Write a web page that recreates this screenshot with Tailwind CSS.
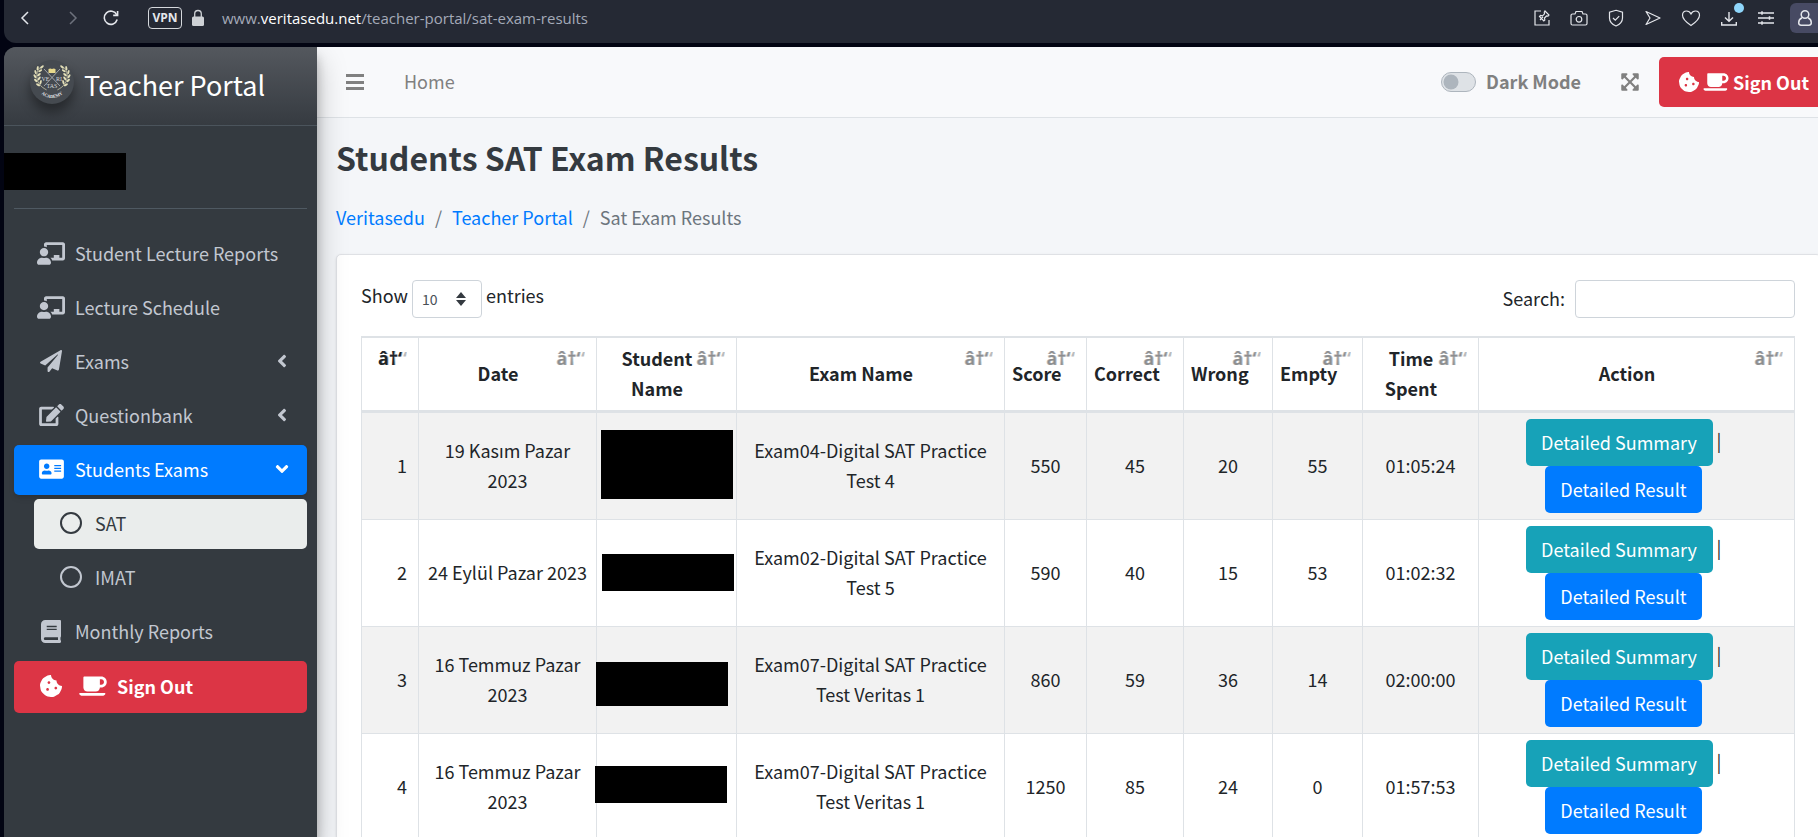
<!DOCTYPE html>
<html lang="en">
<head>
<meta charset="utf-8">
<title>Students SAT Exam Results</title>
<script src="https://cdn.jsdelivr.net/npm/@tailwindcss/browser@4"></script>
</head>
<body class="flex h-screen flex-col overflow-hidden bg-[#020412] font-['Noto_Sans_CJK_KR','Noto_Sans',sans-serif] text-lg leading-[30px] text-[#212529]">

<svg class="hidden" aria-hidden="true">
  <symbol id="i-teacher" viewBox="0 0 640 512"><path d="M208 352c-2.39 0-4.78.35-7.06 1.09C187.98 357.3 174.35 360 160 360c-14.35 0-27.98-2.7-40.95-6.91-2.28-.74-4.66-1.09-7.05-1.09C49.94 352-.33 402.48 0 464.62.14 490.88 21.73 512 48 512h224c26.27 0 47.86-21.12 48-47.38.33-62.14-49.94-112.62-112-112.62zm-48-32c53.02 0 96-42.98 96-96s-42.98-96-96-96-96 42.98-96 96 42.98 96 96 96zM592 0H208c-26.47 0-48 22.25-48 49.59V96c23.42 0 45.1 6.78 64 17.8V64h352v288h-64v-64H384v64h-76.24c19.1 16.69 33.12 38.73 39.69 64H592c26.47 0 48-22.25 48-49.59V49.59C640 22.25 618.47 0 592 0z"/></symbol>
  <symbol id="i-plane" viewBox="0 0 512 512"><path d="M476 3.2L12.5 270.6c-18.1 10.4-15.8 35.6 2.2 43.2L121 358.4l287.3-253.2c5.5-4.9 13.3 2.6 8.6 8.3L176 407v80.5c0 23.6 28.5 32.9 42.5 15.8L282 426l124.6 52.2c14.2 6 30.4-2.9 33-18.2l72-432C515 7.8 493.3-6.8 476 3.2z"/></symbol>
  <symbol id="i-edit" viewBox="0 0 576 512"><path d="M402.6 83.2l90.2 90.2c3.8 3.8 3.8 10 0 13.8L274.4 405.6l-92.8 10.3c-12.4 1.4-22.9-9.1-21.5-21.5l10.3-92.8L388.8 83.2c3.8-3.8 10-3.8 13.8 0zm162-22.9l-48.8-48.8c-15.2-15.2-39.9-15.2-55.2 0l-35.4 35.4c-3.8 3.8-3.8 10 0 13.8l90.2 90.2c3.8 3.8 10 3.8 13.8 0l35.4-35.4c15.2-15.3 15.2-40 0-55.2zM384 346.2V448H64V128h229.8c3.2 0 6.2-1.3 8.5-3.5l40-40c7.6-7.6 2.2-20.5-8.5-20.5H48C21.5 64 0 85.5 0 112v352c0 26.5 21.5 48 48 48h352c26.5 0 48-21.5 48-48V306.2c0-10.7-12.9-16-20.5-8.5l-40 40c-2.2 2.3-3.5 5.3-3.5 8.5z"/></symbol>
  <symbol id="i-card" viewBox="0 0 576 512"><path d="M528 32H48C21.5 32 0 53.5 0 80v352c0 26.5 21.5 48 48 48h480c26.5 0 48-21.5 48-48V80c0-26.5-21.5-48-48-48zm-352 96c35.3 0 64 28.7 64 64s-28.7 64-64 64-64-28.7-64-64 28.7-64 64-64zm112 236.8c0 10.6-10 19.2-22.4 19.2H86.4C74 384 64 375.4 64 364.8v-19.2c0-31.8 30.1-57.6 67.2-57.6h5c12.3 5.1 25.7 8 39.8 8s27.6-2.9 39.8-8h5c37.1 0 67.2 25.8 67.2 57.6v19.2zM512 312c0 4.4-3.6 8-8 8H360c-4.4 0-8-3.6-8-8v-16c0-4.4 3.6-8 8-8h144c4.4 0 8 3.6 8 8v16zm0-64c0 4.4-3.6 8-8 8H360c-4.4 0-8-3.6-8-8v-16c0-4.4 3.6-8 8-8h144c4.4 0 8 3.6 8 8v16zm0-64c0 4.4-3.6 8-8 8H360c-4.4 0-8-3.6-8-8v-16c0-4.4 3.6-8 8-8h144c4.4 0 8 3.6 8 8v16z"/></symbol>
  <symbol id="i-book" viewBox="0 0 448 512"><path d="M448 360V24c0-13.3-10.7-24-24-24H96C43 0 0 43 0 96v320c0 53 43 96 96 96h328c13.3 0 24-10.7 24-24v-16c0-7.5-3.5-14.3-8.9-18.7-4.2-15.4-4.2-59.3 0-74.7 5.4-4.3 8.9-11.1 8.9-18.6zM128 134c0-3.3 2.7-6 6-6h212c3.3 0 6 2.7 6 6v20c0 3.3-2.7 6-6 6H134c-3.3 0-6-2.7-6-6v-20zm0 64c0-3.3 2.7-6 6-6h212c3.3 0 6 2.7 6 6v20c0 3.3-2.7 6-6 6H134c-3.3 0-6-2.7-6-6v-20zm253.4 250H96c-17.7 0-32-14.3-32-32 0-17.6 14.4-32 32-32h285.4c-1.9 17.1-1.9 46.9 0 64z"/></symbol>
  <symbol id="i-cookie" viewBox="0 0 512 512"><path d="M510.52 255.82c-69.97-.85-126.47-57.69-126.47-127.86-70.17 0-127-56.49-127.86-126.45-27.26-4.14-55.13.3-79.72 12.82l-69.13 35.22a132.221 132.221 0 0 0-57.79 57.81l-35.1 68.88a132.645 132.645 0 0 0-12.82 80.95l12.08 76.27a132.521 132.521 0 0 0 37.16 72.96l54.77 54.76a132.036 132.036 0 0 0 72.71 37.06l76.71 12.15c27.51 4.36 55.7-.11 80.53-12.76l69.13-35.21a132.273 132.273 0 0 0 57.79-57.81l35.1-68.88c12.56-24.64 17.01-52.58 12.91-79.91zM176 368c-17.67 0-32-14.33-32-32s14.33-32 32-32 32 14.33 32 32-14.33 32-32 32zm32-160c-17.67 0-32-14.33-32-32s14.33-32 32-32 32 14.33 32 32-14.33 32-32 32zm160 128c-17.67 0-32-14.33-32-32s14.33-32 32-32 32 14.33 32 32-14.33 32-32 32z"/></symbol>
  <symbol id="i-mug" viewBox="0 0 640 512"><path d="M192 384h192c53 0 96-43 96-96h32c70.6 0 128-57.4 128-128S582.6 32 512 32H120c-13.3 0-24 10.7-24 24v232c0 53 43 96 96 96zM512 96c35.3 0 64 28.7 64 64s-28.7 64-64 64h-32V96h32zm47.7 384H48.3c-47.6 0-61-64-36-64h583.3c25 0 11.8 64-35.9 64z"/></symbol>
  <symbol id="i-angle" viewBox="0 0 256 512"><path d="M31.7 239l136-136c9.4-9.4 24.6-9.4 33.9 0l22.6 22.6c9.4 9.4 9.4 24.6 0 33.9L127.9 256l96.4 96.4c9.4 9.4 9.4 24.6 0 33.9L201.700 409c-9.4 9.4-24.6 9.4-33.9 0l-136-136c-9.5-9.4-9.5-24.6-.1-34z"/></symbol>
  <symbol id="i-expand" viewBox="0 0 448 512"><path d="M448 344v112a23.94 23.94 0 0 1-24 24H312c-21.39 0-32.09-25.9-17-41l36.2-36.2L224 295.6 116.77 402.9 153 439c15.09 15.1 4.39 41-17 41H24a23.94 23.94 0 0 1-24-24V344c0-21.4 25.89-32.1 41-17l36.19 36.2L184.46 256 77.18 148.7 41 185c-15.1 15.1-41 4.4-41-17V56a23.94 23.94 0 0 1 24-24h112c21.39 0 32.09 25.9 17 41l-36.2 36.2L224 216.4l107.23-107.3L295 73c-15.09-15.1-4.39-41 17-41h112a23.94 23.94 0 0 1 24 24v112c0 21.4-25.89 32.1-41 17l-36.19-36.2L263.54 256l107.28 107.3L407 327.1c15.1-15.2 41-4.5 41 16.9z"/></symbol>
  <symbol id="i-laurel" viewBox="0 0 20 30">
    <path d="M16 29C8 25 4 19 4.500 11C5 7 7 4 9.500 1.500" fill="none" stroke="currentColor" stroke-width=".8"/>
    <g fill="currentColor">
      <ellipse cx="10.500" cy="2" rx="2.600" ry="1.200" transform="rotate(-40 10.500 2)"/>
      <ellipse cx="5.500" cy="3.500" rx="2.600" ry="1.200" transform="rotate(-80 5.500 3.500)"/>
      <ellipse cx="8.500" cy="6.500" rx="2.600" ry="1.200" transform="rotate(-35 8.500 6.500)"/>
      <ellipse cx="3" cy="8" rx="2.600" ry="1.200" transform="rotate(75 3 8)"/>
      <ellipse cx="7" cy="11" rx="2.600" ry="1.200" transform="rotate(-40 7 11)"/>
      <ellipse cx="2.300" cy="13" rx="2.600" ry="1.200" transform="rotate(60 2.300 13)"/>
      <ellipse cx="7.300" cy="15.500" rx="2.600" ry="1.200" transform="rotate(-55 7.300 15.500)"/>
      <ellipse cx="3.300" cy="18" rx="2.600" ry="1.200" transform="rotate(45 3.300 18)"/>
      <ellipse cx="9" cy="20" rx="2.600" ry="1.200" transform="rotate(-75 9 20)"/>
      <ellipse cx="6" cy="23" rx="2.600" ry="1.200" transform="rotate(30 6 23)"/>
    </g>
  </symbol>
</svg>

<!-- Browser toolbar -->
<header class="ml-1 flex h-[43px] shrink-0 items-start justify-between rounded-bl-xl bg-[#252934] text-[#e4e6eb]">
  <div class="flex h-9 items-center">
    <button aria-label="Back" class="ml-[13px] w-[18px]"><svg class="h-[18px] w-[18px]" viewBox="0 0 18 18" fill="none" stroke="currentColor" stroke-width="1.500"><path d="M11 3L5 9l6 6"/></svg></button>
    <button aria-label="Forward" class="ml-[29px] w-[18px] text-[#6d717c]"><svg class="h-[18px] w-[18px]" viewBox="0 0 18 18" fill="none" stroke="currentColor" stroke-width="1.500"><path d="M6 3l6 6-6 6"/></svg></button>
    <button aria-label="Reload" class="ml-5 w-[18px]"><svg class="h-[18px] w-[18px]" viewBox="0 0 18 18" fill="none" stroke="currentColor" stroke-width="1.600"><path d="M15.200 10.600A6.600 6.600 0 1 1 14.800 5.800"/><path d="M15.600 2v4.400h-4.400" /></svg></button>
    <button class="ml-7 flex h-[22px] w-[34px] items-center justify-center rounded border border-[#d5d8dc] font-['Open_Sans',sans-serif] text-xs font-bold">VPN</button>
    <svg class="ml-2.5 h-[18px] w-3 text-[#ced1d5]" viewBox="0 0 12 18" fill="none" stroke="currentColor" stroke-width="1.300"><path d="M2.700 8V4.800a3.300 3.300 0 0 1 6.600 0V8"/><rect y="7.500" width="12" height="9.500" rx="1.500" fill="currentColor" stroke="none"/></svg>
    <span class="ml-[18px] font-['Open_Sans',sans-serif] text-[15px] text-[#a4aab8]">www.<span class="text-white">veritasedu.net</span>/teacher-portal/sat-exam-results</span>
  </div>
  <div class="-mr-px flex h-9 items-center gap-[19px]">
    <button aria-label="Easy setup"><svg class="h-[18px] w-[18px]" viewBox="0 0 18 18" fill="none" stroke="currentColor" stroke-width="1.200"><path d="M8 2H2v14h14v-5"/><path d="M7 11l3-3M12 2l4 4-1 1.200-1.500-.2-2 2 .3 2-1 1L6.500 7.500l1-1 2 .3 2-2-.2-1.600z"/></svg></button>
    <button aria-label="Snapshot"><svg class="h-[18px] w-[18px]" viewBox="0 0 18 18" fill="none" stroke="currentColor" stroke-width="1.200"><path d="M1 6.500A1.500 1.500 0 0 1 2.500 5H5l1-2.500h6L13 5h2.500A1.500 1.500 0 0 1 17 6.500v8a1.500 1.500 0 0 1-1.500 1.500h-13A1.500 1.500 0 0 1 1 14.500z"/><circle cx="9" cy="10.300" r="2.800"/></svg></button>
    <button aria-label="Ad blocker"><svg class="h-[18px] w-[18px]" viewBox="0 0 18 18" fill="none" stroke="currentColor" stroke-width="1.200"><path d="M9 1.300l6.500 2V9c0 4-3 6.500-6.500 8-3.500-1.500-6.500-4-6.500-8V3.300z"/><path d="M6 9l2.300 2.200L12.200 7.200"/></svg></button>
    <button aria-label="My flow"><svg class="h-[18px] w-[18px]" viewBox="0 0 18 18" fill="none" stroke="currentColor" stroke-width="1.200" stroke-linejoin="round"><path d="M2 2.500L16 9 2 15.500 6 9z"/></svg></button>
    <button aria-label="Favourites"><svg class="h-[18px] w-[20px]" viewBox="0 0 20 18" fill="none" stroke="currentColor" stroke-width="1.200"><path d="M10 16.500C4 12.500 1.500 9.500 1.500 6.300 1.500 3.800 3.300 2 5.600 2 7.500 2 9 3 10 5c1-2 2.500-3 4.400-3 2.300 0 4.100 1.800 4.100 4.300 0 3.200-2.500 6.200-8.500 10.200z"/></svg></button>
    <button aria-label="Downloads" class="relative"><svg class="h-[18px] w-[18px]" viewBox="0 0 18 18" fill="none" stroke="currentColor" stroke-width="1.400"><path d="M9 3v9M5 8.500L9 12.300l4-3.800M1.700 13v3h14.600v-3"/></svg><span class="absolute -top-1.5 left-3.5 size-2.5 rounded-full bg-[#8fd6fb]"></span></button>
    <button aria-label="Settings"><svg class="h-[18px] w-[18px]" viewBox="0 0 18 18" fill="none" stroke="currentColor" stroke-width="1.500"><path d="M1 4h16M1 9h16M1 14h16M5 2.200v3.600M12.500 7.200v3.600M5 12.200v3.600"/></svg></button>
    <button aria-label="Profile" class="-ml-1 flex h-[30px] w-[29px] items-center justify-center rounded-l-md bg-[#474a63]"><svg class="h-[18px] w-[16px]" viewBox="0 0 16 18" fill="none" stroke="currentColor" stroke-width="1.500"><circle cx="8" cy="5.500" r="3.800"/><path d="M5 8.800c-2.200 1-3.300 3-3.300 5 0 1.500 1 2.400 2.400 2.400h7.800c1.400 0 2.400-.9 2.400-2.400 0-2-1.100-4-3.300-5"/></svg></button>
  </div>
</header>

<div class="mt-1 ml-1 flex min-h-0 flex-1 overflow-hidden rounded-tl-xl">

  <!-- Sidebar -->
  <aside class="z-10 w-[313px] shrink-0 bg-[#343a40] text-[#c2c7d0] shadow-[0_14px_28px_rgba(0,0,0,0.25),0_10px_10px_rgba(0,0,0,0.22)]">
    <a href="#" class="flex h-[79px] items-center border-b border-[#4b545c] bg-linear-to-b from-[#54585e] to-[#363b41] pl-[26px] text-white">
      <svg class="mb-2 size-11 shrink-0 rounded-full bg-[#454a50] shadow-[0_8px_12px_rgba(0,0,0,0.4)]" viewBox="0 0 44 44" role="img" aria-label="Veritas Academy">
        <use href="#i-laurel" x="3" y="5" width="17" height="26" class="text-[#e3dfb8]"/>
        <g transform="translate(44 0) scale(-1 1)"><use href="#i-laurel" x="3" y="5" width="17" height="26" class="text-[#e3dfb8]"/></g>
        <path d="M14 9l16 17M30 9L14 26" stroke="#b9bcc0" stroke-width=".8"/>
        <path d="M18.500 9q1.800-1 3.500 0 1.700-1 3.500 0v4h-7z" fill="#e8d98c"/>
        <g fill="#d7d9db" font-family="Liberation Serif, serif" text-anchor="middle"><text x="15.500" y="20.500" font-size="6">VE</text><text x="29" y="20.500" font-size="6">RI</text><text x="22" y="27.500" font-size="6">TAS</text></g>
        <path id="arc" d="M10 33Q22 43 34 33" fill="none"/>
        <text fill="#e5e7e9" font-family="Liberation Serif, serif" font-weight="bold" font-size="4.500"><textPath href="#arc" startOffset="50%" text-anchor="middle">ACADEMY</textPath></text>
      </svg>
      <span class="ml-2.5 pb-0.5 text-[27px]">Teacher Portal</span>
    </a>
    <div class="mx-2.5 mb-5 flex h-[83px] items-center border-b border-[#4f5962]">
      <div class="mt-2 -ml-3.5 h-[37px] w-[126px] bg-black"></div>
    </div>
    <nav class="flex flex-col gap-1 px-2.5">
      <a href="#" class="flex h-[50px] items-center gap-1.5 pb-0.5 pl-[19px]"><span class="flex w-9 justify-center"><svg class="h-[23px] w-[28px] fill-current"><use href="#i-teacher"/></svg></span>Student Lecture Reports</a>
      <a href="#" class="flex h-[50px] items-center gap-1.5 pb-0.5 pl-[19px]"><span class="flex w-9 justify-center"><svg class="h-[23px] w-[28px] fill-current"><use href="#i-teacher"/></svg></span>Lecture Schedule</a>
      <a href="#" class="flex h-[50px] items-center gap-1.5 pr-5 pb-0.5 pl-[19px]"><span class="flex w-9 justify-center"><svg class="size-[22px] fill-current"><use href="#i-plane"/></svg></span><span class="flex-1">Exams</span><svg class="h-5 w-2.5 fill-current"><use href="#i-angle"/></svg></a>
      <a href="#" class="flex h-[50px] items-center gap-1.5 pr-5 pb-0.5 pl-[19px]"><span class="flex w-9 justify-center"><svg class="h-[22px] w-[25px] fill-current"><use href="#i-edit"/></svg></span><span class="flex-1">Questionbank</span><svg class="h-5 w-2.5 fill-current"><use href="#i-angle"/></svg></a>
      <a href="#" class="flex h-[50px] items-center gap-1.5 rounded-[5px] bg-[#007bff] pr-5 pb-0.5 pl-[19px] text-white shadow-md"><span class="flex w-9 justify-center"><svg class="h-[22px] w-[25px] fill-current"><use href="#i-card"/></svg></span><span class="flex-1">Students Exams</span><svg class="h-5 w-2.5 -rotate-90 fill-current"><use href="#i-angle"/></svg></a>
      <a href="#" class="ml-5 flex h-[50px] items-center gap-1.5 rounded-[5px] bg-[#eaedec] pb-0.5 pl-[19px] text-[#343a40]"><span class="flex w-9 justify-center"><span class="size-[22px] rounded-full border-2 border-current"></span></span>SAT</a>
      <a href="#" class="ml-5 flex h-[50px] items-center gap-1.5 pb-0.5 pl-[19px]"><span class="flex w-9 justify-center"><span class="size-[22px] rounded-full border-2 border-current"></span></span>IMAT</a>
      <a href="#" class="flex h-[50px] items-center gap-1.5 pb-0.5 pl-[19px]"><span class="flex w-9 justify-center"><svg class="h-[23px] w-5 fill-current"><use href="#i-book"/></svg></span>Monthly Reports</a>
      <a href="#" class="flex h-[52px] items-center gap-1.5 rounded-[5px] bg-[#dc3545] pb-0.5 pl-[19px] font-bold text-white"><span class="flex w-9 justify-center"><svg class="size-[22px] fill-current"><use href="#i-cookie"/></svg></span><span class="flex w-9 justify-center"><svg class="h-[22px] w-7 fill-current"><use href="#i-mug"/></svg></span>Sign Out</a>
    </nav>
  </aside>

  <!-- Content column, slightly wider than the viewport -->
  <div class="-mr-[21px] min-w-0 flex-1 bg-[#f4f6f9]">
    <div class="flex h-[71px] items-center justify-between border-b border-[#dee2e6] bg-[#f8f9fb] pr-2.5 pl-[29px] text-[#808080]">
      <div class="flex items-center gap-10">
        <button aria-label="Toggle menu" class="flex h-4 w-[18px] flex-col justify-between"><span class="h-[3px] w-full bg-current"></span><span class="h-[3px] w-full bg-current"></span><span class="h-[3px] w-full bg-current"></span></button>
        <a href="#" class="pb-0.5">Home</a>
      </div>
      <div class="flex items-center">
        <label class="flex items-center gap-2.5 font-bold">
          <input type="checkbox" class="h-5 w-[35px] appearance-none rounded-full border border-[#adb5bd] bg-[#dee2e6] before:-mt-px before:-ml-px before:block before:size-5 before:scale-75 before:rounded-full before:bg-[#adb5bd]">
          <span class="pb-0.5">Dark Mode</span>
        </label>
        <button aria-label="Fullscreen" class="ml-10"><svg class="h-5 w-[18px] fill-current"><use href="#i-expand"/></svg></button>
        <button class="ml-5 flex h-[50px] items-center gap-1 rounded-[5px] bg-[#dc3545] px-5 font-bold text-white"><svg class="size-5 fill-current"><use href="#i-cookie"/></svg><svg class="h-5 w-[26px] fill-current"><use href="#i-mug"/></svg>Sign Out</button>
      </div>
    </div>

    <main class="pr-[18px] pl-[19px]">
      <h1 class="pt-[17px] text-[32px] leading-[44px] font-bold text-[#343a40]">Students SAT Exam Results</h1>
      <nav class="mt-[23px] flex gap-2.5 text-[#6c757d]" aria-label="Breadcrumb">
        <a href="#" class="text-[#007bff]">Veritasedu</a><span>/</span>
        <a href="#" class="text-[#007bff]">Teacher Portal</a><span>/</span>
        <span>Sat Exam Results</span>
      </nav>

      <section class="mt-[22px] rounded-[5px] border border-[#dfe1e5] bg-white pt-[25px] pr-[25px] pb-6 pl-6 shadow-sm">
        <div class="flex items-center justify-between">
          <label class="flex items-start gap-1">Show
            <span class="relative">
              <select class="block h-[38px] w-[70px] appearance-none rounded border border-[#ced4da] bg-white pl-[9px] text-sm text-[#495057]"><option>10</option><option>25</option><option>50</option><option>100</option></select>
              <svg class="pointer-events-none absolute top-3 right-4 h-[14px] w-2.5 fill-[#343a40]" viewBox="0 0 10 14"><path d="M5 0l5 6H0zM5 14L0 8h10z"/></svg>
            </span>
            entries</label>
          <label class="flex items-center gap-2.5"><span class="pb-0.5">Search:</span><input type="search" class="h-[38px] w-[220px] rounded border border-[#ced4da] bg-white px-2.5 text-sm"></label>
        </div>

        <table class="mt-[18px] w-full table-fixed border-separate border-spacing-0 border-t-2 border-l border-[#dee2e6] text-center">
          <colgroup><col class="w-[57px]"><col class="w-[178px]"><col class="w-[140px]"><col class="w-[268px]"><col class="w-[82px]"><col class="w-[97px]"><col class="w-[89px]"><col class="w-[90px]"><col class="w-[116px]"><col></colgroup>
          <thead id="head"></thead>
          <tbody id="rows"></tbody>
        </table>
      </section>
    </main>
  </div>
</div>

<script>
  const heads = ['', 'Date', 'Student Name', 'Exam Name', 'Score', 'Correct', 'Wrong', 'Empty', 'Time Spent', 'Action'];
  document.getElementById('head').innerHTML = '<tr>' + heads.map((h, i) =>
    `<th scope="col" class="relative h-[75px] border-r border-b-3 border-[#dee2e6] pr-[26px] pb-0.5 pl-[7px] align-middle font-bold">${h}` +
    `<span class="absolute top-[5px] right-4 font-['Noto_Sans',sans-serif] ${i ? 'opacity-30' : ''}">â†‘</span><span class="absolute top-[5px] right-[11px] font-['Noto_Sans',sans-serif] opacity-30">â†“</span></th>`).join('') + '</tr>';

  const data = [
    ['19 Kasım Pazar 2023', 'top-[17px] left-1 h-[69px]', 'Exam04-Digital SAT Practice Test 4', 550, 45, 20, 55, '01:05:24'],
    ['24 Eylül Pazar 2023', 'top-[34px] left-[5px] h-[37px]', 'Exam02-Digital SAT Practice Test 5', 590, 40, 15, 53, '01:02:32'],
    ['16 Temmuz Pazar 2023', 'top-[35px] -left-px h-[44px]', 'Exam07-Digital SAT Practice Test Veritas 1', 860, 59, 36, 14, '02:00:00'],
    ['16 Temmuz Pazar 2023', 'top-[32px] -left-0.5 h-[37px]', 'Exam07-Digital SAT Practice Test Veritas 1', 1250, 85, 24, 0, '01:57:53'],
  ];
  document.getElementById('rows').innerHTML = data.map((r, i) => `
    <tr class="odd:bg-[#f2f2f2]">
      <td class="h-[107px] border-r border-b border-[#dee2e6] pr-[11px] pb-0.5 text-right">${i + 1}</td>
      <td class="border-r border-b border-[#dee2e6] px-[7px] pb-0.5">${r[0]}</td>
      <td class="relative border-r border-b border-[#dee2e6]"><div class="absolute w-[132px] bg-black ${r[1]}"></div></td>
      <td class="border-r border-b border-[#dee2e6] px-2 pb-0.5">${r[2]}</td>
      ${r.slice(3).map(v => `<td class="border-r border-b border-[#dee2e6] pb-0.5">${v}</td>`).join('')}
      <td class="border-r border-b border-[#dee2e6] pr-[26px]">
        <div class="flex flex-col items-center">
          <div class="flex items-center gap-1"><button class="h-[47px] w-[187px] rounded-[5px] bg-[#17a2b8] pb-0.5 text-white">Detailed Summary</button><span class="pb-1.5">|</span></div>
          <button class="h-[47px] w-[157px] rounded-[5px] bg-[#007bff] pb-0.5 text-white">Detailed Result</button>
        </div>
      </td>
    </tr>`).join('');
</script>
</body>
</html>
